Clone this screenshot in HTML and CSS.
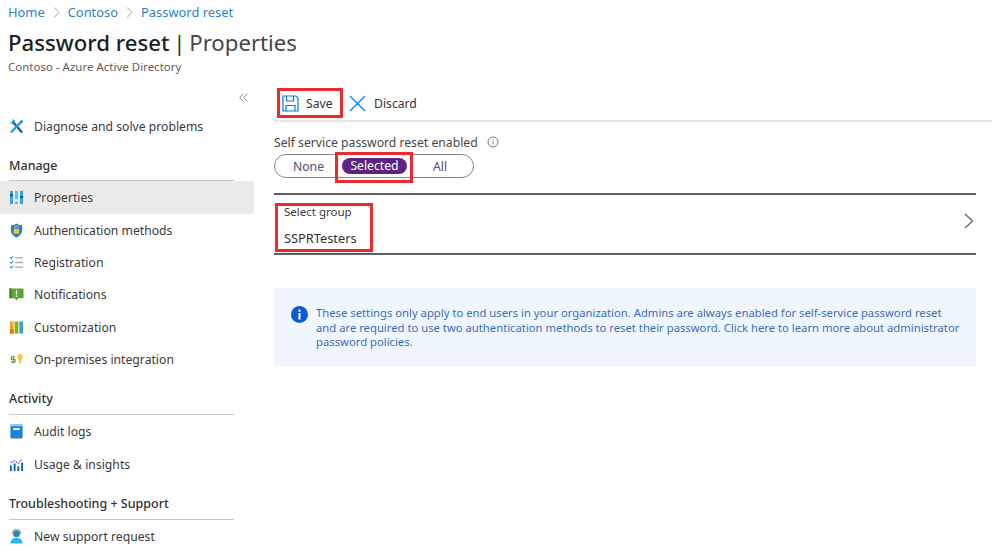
FILE: index.html
```html
<!DOCTYPE html>
<html lang="en">
<head>
<meta charset="utf-8">
<title>Password reset | Properties</title>
<link rel="stylesheet" href="styles.css">
</head>
<body>
<header class="page-head">
  <nav class="crumbs">
    <a>Home</a>
    <svg class="crumb-sep" width="7" height="11" viewBox="0 0 7 11"><path d="M1 .5l5 5-5 5" fill="none" stroke="#a19f9d"/></svg>
    <a>Contoso</a>
    <svg class="crumb-sep" width="7" height="11" viewBox="0 0 7 11"><path d="M1 .5l5 5-5 5" fill="none" stroke="#a19f9d"/></svg>
    <a>Password reset</a>
  </nav>
  <h1 class="title"><span class="title-main">Password reset</span> <span class="title-sep">|</span> <span class="title-sub">Properties</span></h1>
  <p class="subtitle">Contoso - Azure Active Directory</p>
</header>
<div class="layout">
  <aside class="sidebar">
    <div class="collapse">
      <svg width="9" height="9" viewBox="0 0 9 9"><path d="M4.200.5L.7 4.500l3.500 4M8.200.5L4.700 4.500l3.500 4" fill="none" stroke="#8a8886"/></svg>
    </div>
    <a class="row">
      <svg class="icon" viewBox="0 0 16 16"><path d="M3.500 2.500l10.500 12" stroke="#0d5a92" stroke-width="2.400" fill="none"/><path d="M2 14.500L12 4" stroke="#1e9be0" stroke-width="2.400" fill="none"/><path d="M10.500 3.500L13.500.7 15.500 2.700l-2.700 3z" fill="#1e9be0"/><path d="M.8 3L2.500 4.800 5 2.400 3.200.7C4.800.2 6.500 1.300 6.500 3L5 5.500C3 6 .6 5 .8 3z" fill="#1e9be0"/></svg>
      Diagnose and solve problems
    </a>
    <h2 class="section">Manage</h2>
    <a class="row active">
      <svg class="icon" viewBox="0 0 16 16"><rect x="1" y="1" width="3.200" height="14" fill="#2aa7e6"/><rect x="6.400" y="1" width="3.200" height="14" fill="#58c4f0"/><rect x="11.800" y="1" width="3.200" height="14" fill="#2aa7e6"/><rect x="1" y="4.500" width="3.200" height="2" fill="#0b4f92"/><rect x="6.400" y="10" width="3.200" height="2" fill="#fff"/><rect x="11.800" y="6.500" width="3.200" height="2" fill="#0b4f92"/></svg>
      Properties
    </a>
    <a class="row">
      <svg class="icon" viewBox="0 0 16 16"><path d="M8 .5c2 1.500 4 2 6 2v5.500c0 3.500-3 6-6 7.500-3-1.500-6-4-6-7.500V2.500c2 0 4-.5 6-2z" fill="#1c7ed6"/><rect x="5" y="6.500" width="6" height="5" rx=".7" fill="#f4c430"/><path d="M6.200 6.500V5a1.800 1.800 0 013.600 0v1.500" fill="none" stroke="#f4c430" stroke-width="1.100"/></svg>
      Authentication methods
    </a>
    <a class="row">
      <svg class="icon" viewBox="0 0 16 16"><path d="M1 2.500l1.300 1.300L4.500 1.500M1 7.500l1.300 1.300 2.200-2.300M1 12.500l1.300 1.300 2.200-2.300" fill="none" stroke="#2e8fe0" stroke-width="1.200"/><path d="M6.500 3h8.500M6.500 8h8.500M6.500 13h8.500" stroke="#a6a6a6" stroke-width="1.400"/></svg>
      Registration
    </a>
    <a class="row">
      <svg class="icon" viewBox="0 0 16 16"><path d="M.5 1.500h15v10.500H10L8 14.500 6 12H.5z" fill="#5ea52f"/><path d="M.5 1.500h2V12h-2z" fill="#3f7d20"/><rect x="7.300" y="3.500" width="1.500" height="4.500" fill="#fff"/><rect x="7.300" y="9" width="1.500" height="1.500" fill="#fff"/></svg>
      Notifications
    </a>
    <a class="row">
      <svg class="icon" viewBox="0 0 16 16"><rect x="1" y="1.500" width="4" height="13" fill="#f7a711"/><rect x="1" y="10" width="4" height="4.500" fill="#f06a0f"/><rect x="6" y="1.500" width="4" height="13" fill="#7fba00"/><rect x="11" y="1.500" width="4" height="13" fill="#3f9be8"/></svg>
      Customization
    </a>
    <a class="row">
      <svg class="icon" viewBox="0 0 16 16"><path d="M6.500 5.500H2.500v2.500h4v2.500H2" fill="none" stroke="#5ea52f" stroke-width="1.300"/><path d="M4.500 3.500v9" stroke="#5ea52f"/><circle cx="11.800" cy="5" r="3" fill="#f8cf3a"/><rect x="11" y="7" width="1.600" height="5" fill="#e3a81c"/></svg>
      On-premises integration
    </a>
    <h2 class="section section-next">Activity</h2>
    <a class="row">
      <svg class="icon" viewBox="0 0 16 16"><rect x="1.500" y=".5" width="13" height="15" rx="1.500" fill="#1b82d6"/><rect x="1.500" y=".5" width="13" height="2" fill="#8cc8ef"/><rect x="4.500" y="4.500" width="7" height="2" fill="#fff"/></svg>
      Audit logs
    </a>
    <a class="row">
      <svg class="icon" viewBox="0 0 16 16"><rect x="1" y="9" width="2" height="6" fill="#0b5cab"/><rect x="5" y="7" width="2" height="8" fill="#0b5cab"/><rect x="9" y="10" width="2" height="5" fill="#0b5cab"/><rect x="13" y="6" width="2" height="9" fill="#0b5cab"/><path d="M2 6l4-2 4 3 4-5" fill="none" stroke="#9b5bd4" stroke-width="1.300" stroke-dasharray="2 1"/></svg>
      Usage &amp; insights
    </a>
    <h2 class="section section-next">Troubleshooting + Support</h2>
    <a class="row">
      <svg class="icon" viewBox="0 0 16 16"><path d="M1.500 15.500c0-4 2.500-6 6.500-6s6.500 2 6.500 6z" fill="#29b6e8"/><circle cx="8" cy="5" r="3.700" fill="#1c89c9"/><path d="M3.200 5a4.800 4.800 0 019.600 0" fill="none" stroke="#8a8886"/></svg>
      New support request
    </a>
  </aside>
  <main class="main">
    <div class="toolbar">
      <button class="tool tool-save">
        <svg width="17" height="17" viewBox="0 0 17 17"><path d="M1 1h13l2 2v13H1z M4 16v-5.500h9V16 M4.500 1v5h7V1" fill="none" stroke="#0f78d4" stroke-width="1.200"/></svg>
        Save
      </button>
      <button class="tool tool-discard">
        <svg width="17" height="17" viewBox="0 0 17 17"><path d="M1 1l15 15M16 1L1 16" fill="none" stroke="#0f78d4" stroke-width="1.200"/></svg>
        Discard
      </button>
    </div>
    <div class="content">
      <div class="field-label">
        Self service password reset enabled
        <svg width="12" height="12" viewBox="0 0 12 12"><circle cx="6" cy="6" r="5" fill="none" stroke="#797775"/><path d="M6 5.200v3.300M6 3.200v1" stroke="#797775"/></svg>
      </div>
      <div class="toggle">
        <span class="opt opt-none">None</span>
        <span class="opt opt-selected">Selected</span>
        <span class="opt opt-all">All</span>
        <span class="mark-toggle"></span>
      </div>
      <div class="picker">
        <div class="picker-box">
          <div class="picker-label">Select group</div>
          <div class="picker-value">SSPRTesters</div>
        </div>
        <svg class="picker-arrow" width="10" height="16" viewBox="0 0 10 16"><path d="M1 1l7.500 7L1 15" fill="none" stroke="#605e5c" stroke-width="1.200"/></svg>
      </div>
      <div class="notice">
        <svg class="notice-icon" width="17" height="17" viewBox="0 0 17 17"><circle cx="8.500" cy="8.500" r="8.500" fill="#0a5ad4"/><rect x="7.500" y="7" width="2" height="6.500" fill="#fff"/><circle cx="8.500" cy="4.800" r="1.200" fill="#fff"/></svg>
        <p class="notice-text">These settings only apply to end users in your organization. Admins are always enabled for self-service password reset and are required to use two authentication methods to reset their password. Click here to learn more about administrator password policies.</p>
      </div>
    </div>
  </main>
</div>
</body>
</html>
```
FILE: styles.css
```css
* { box-sizing: border-box; }
html, body { margin: 0; padding: 0; }
body {
  width: 992px;
  height: 560px;
  overflow: hidden;
  background: #fff;
  color: #323130;
  font-family: "Noto Sans", "Open Sans", sans-serif;
  font-size: 12.200px;
}
.page-head { padding-left: 8px; height: 82px; }
.crumbs {
  display: flex;
  align-items: center;
  gap: 8px;
  height: 24px;
  color: #2f7fc9;
  font-size: 12.900px;
}
.crumb-sep { flex: none; }
.title {
  margin: 0;
  height: 38px;
  line-height: 37px;
  font-size: 22.200px;
  font-weight: 400;
  word-spacing: -2px;
  white-space: nowrap;
  color: #201f1e;
}
.title-main { font-weight: 500; word-spacing: 0; }
.title-sep { color: #323130; }
.title-sub { color: #484644; }
.subtitle {
  margin: -2px 0 0;
  line-height: 14px;
  font-size: 11.500px;
  color: #605e5c;
}
.layout { display: flex; }
.sidebar { width: 254px; flex: none; }
.collapse {
  height: 28px;
  display: flex;
  align-items: center;
  justify-content: flex-end;
  padding: 2px 6px 0 0;
}
.row {
  display: flex;
  align-items: center;
  gap: 10px;
  height: 32.300px;
  padding: 1px 0 0 9px;
  color: #3b3a39;
  white-space: nowrap;
}
.row.active { background: #edebe9; }
.icon { width: 15px; height: 15px; flex: none; }
.section {
  margin: 0 20px 0 9px;
  padding: 15px 0 5px;
  line-height: 18px;
  font-size: 12.500px;
  font-weight: 500;
  color: #323130;
  border-bottom: 1px solid #c8c6c4;
}
.section-next { padding-bottom: 6px; }
.main { flex: 1; padding-left: 20px; min-width: 0; }
.toolbar {
  display: flex;
  align-items: flex-start;
  height: 40px;
  padding-top: 6px;
  border-bottom: 2px solid #e6e6e6;
}
.tool {
  display: flex;
  align-items: center;
  gap: 7px;
  height: 30px;
  padding: 0;
  border: 0;
  background: none;
  color: #323130;
  font: inherit;
}
.tool-save {
  width: 66px;
  margin-left: 3px;
  border: 3px solid #ee2a2e;
  padding-left: 2px;
}
.tool-discard { margin-left: 6px; gap: 8px; }
.content { margin-right: 16px; }
.field-label {
  display: flex;
  align-items: center;
  gap: 9px;
  height: 20px;
  margin-top: 10px;
  color: #484644;
}
.toggle {
  position: relative;
  display: flex;
  align-items: center;
  width: 200px;
  height: 24px;
  margin-top: 2px;
  border: 1.500px solid #8a8886;
  border-radius: 12px;
}
.opt { text-align: center; }
.opt-none { width: 67px; color: #5b4a78; }
.opt-selected {
  width: 65px;
  height: 16px;
  line-height: 15px;
  border-radius: 8px;
  background: #5c2483;
  color: #fff;
}
.opt-all { width: 66px; color: #5b4a78; }
.mark-toggle {
  position: absolute;
  left: 60px;
  top: -3.500px;
  width: 78px;
  height: 31px;
  border: 3px solid #ee2a2e;
}
.picker {
  display: flex;
  align-items: flex-start;
  justify-content: space-between;
  height: 62px;
  margin-top: 15px;
  padding: 8px 2px 0 1px;
  border-top: 2px solid #5f5f5f;
  border-bottom: 2px solid #5f5f5f;
}
.picker-box {
  width: 98px;
  height: 49px;
  padding-left: 6px;
  border: 3px solid #ee2a2e;
}
.picker-arrow { margin-top: 10px; }
.picker-label { font-size: 11.500px; line-height: 12px; color: #3b3a39; }
.picker-value { margin-top: 11px; font-size: 12.800px; line-height: 18px; color: #323130; }
.notice {
  display: flex;
  gap: 8px;
  height: 78px;
  margin-top: 33px;
  padding: 18px 15px 0 17px;
  background: #eff6ff;
}
.notice-icon { flex: none; }
.notice-text {
  margin: 0;
  font-size: 11.270px;
  line-height: 14.500px;
  color: #3c6db8;
}
```
